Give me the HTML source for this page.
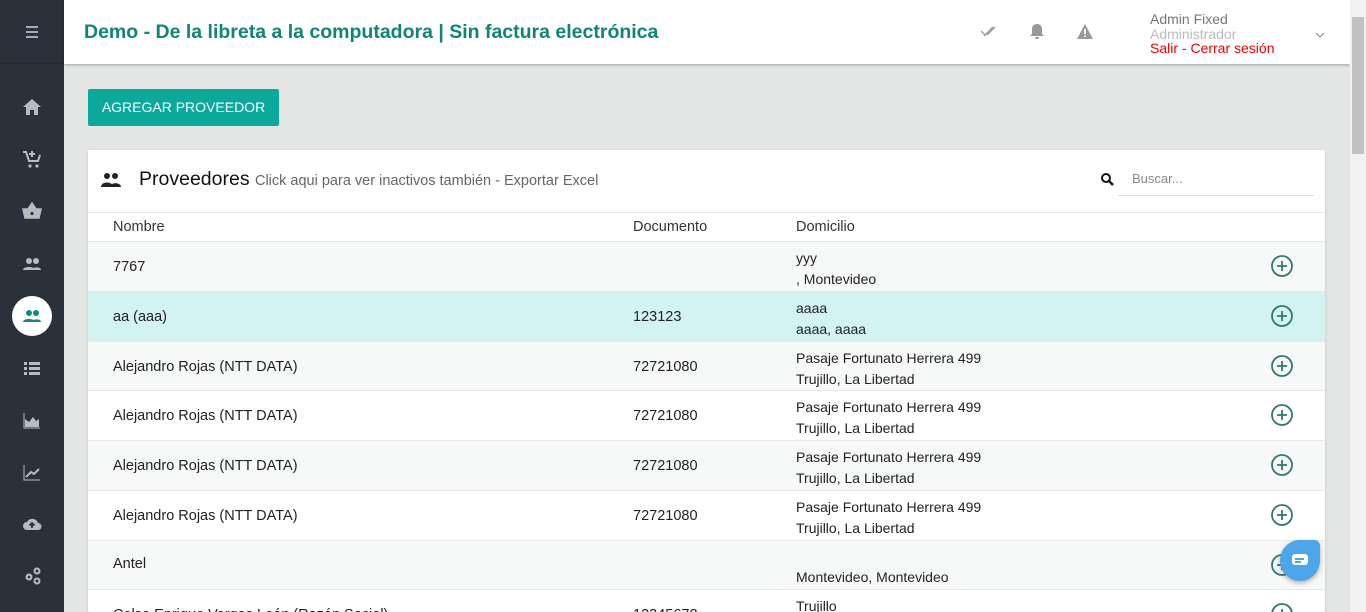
<!DOCTYPE html>
<html style="overflow:hidden;height:612px"><head><meta charset="utf-8"><style>
*{box-sizing:border-box;margin:0;padding:0}
body{width:1366px;height:612px;overflow:hidden;font-family:"Liberation Sans",sans-serif;background:#e4e6e5;position:relative}
.side{position:absolute;left:0;top:0;width:64px;height:612px;background:#2a313a}
.side .top{height:64px;border-bottom:1px solid #252b33}
.ic{position:absolute;left:32px;transform:translate(-50%,-50%);width:20px;height:20px}
.act{position:absolute;left:12px;top:296px;width:40px;height:40px;border-radius:50%;background:#fff}
.hdr{position:absolute;left:64px;top:0;width:1286px;height:64px;background:#fff;box-shadow:0 1px 3px rgba(0,0,0,.3)}
.title{position:absolute;left:20px;top:21px;font-size:19.5px;font-weight:bold;color:#0d8577}
.scroll{position:absolute;left:1350px;top:0;width:16px;height:612px;background:#f1f1f1}
.thumb{position:absolute;left:1352px;top:17px;width:12px;height:137px;background:#c1c1c1}
.btn{position:absolute;left:88px;top:89px;width:191px;height:37px;background:#0ba99c;color:#fff;font-size:14px;text-align:center;line-height:37px;border-radius:2px}
.card{position:absolute;left:88px;top:150px;width:1237px;height:462px;overflow:hidden;background:#fff;border-radius:2px;box-shadow:0 1px 3px rgba(0,0,0,.15)}
.row{position:absolute;left:0;width:1237px;height:50px;border-top:1px solid #e8e8e8;font-size:14.5px;color:#222}
.row .n{position:absolute;left:25px;top:17px}
.row .d{position:absolute;left:545px;top:17px}
.row .a{position:absolute;left:708px;top:6px;font-size:14px;line-height:21px}
.row svg{position:absolute;left:1183px;top:13px}
.g{background:#f7f8f8}.t{background:#d3f3f2}
</style></head><body>
<div class="side"><div class="top"></div>
<svg class="ic" style="top:32px" viewBox="0 0 20 20"><path d="M4 5h12M4 10h12M4 15h12" stroke="#aab" stroke-width="2"/></svg>
<svg class="ic" style="top:107px" viewBox="0 0 20 20"><path d="M10 2L1 10h3v8h4v-5h4v5h4v-8h3z" fill="#b8bcc0"/></svg>
<svg class="ic" style="top:159px" viewBox="0 0 20 20"><path d="M1 3h3l3 9h9l2-6M10 2v6M7 5h6" stroke="#b8bcc0" stroke-width="2" fill="none"/><circle cx="8" cy="17" r="1.6" fill="#b8bcc0"/><circle cx="15" cy="17" r="1.6" fill="#b8bcc0"/></svg>
<svg class="ic" style="top:211px" viewBox="0 0 20 20"><path d="M1 8h18l-2 9H3zM6 8l4-6 4 6" fill="#b8bcc0" stroke="#b8bcc0" stroke-width="1.5"/><circle cx="10" cy="12.5" r="1.6" fill="#2a313a"/></svg>
<svg class="ic" style="top:264px" viewBox="0 0 20 20"><circle cx="7" cy="7" r="3" fill="#b8bcc0"/><circle cx="14" cy="7" r="3" fill="#b8bcc0"/><path d="M1 16c0-4 12-4 12 0zM10 16c0-3 9-4 9 0z" fill="#b8bcc0"/></svg>
<div class="act"></div>
<svg class="ic" style="top:316px" viewBox="0 0 20 20"><circle cx="7" cy="7" r="3" fill="#11897c"/><circle cx="14" cy="7" r="3" fill="#11897c"/><path d="M1 16c0-4 12-4 12 0zM10 16c0-3 9-4 9 0z" fill="#11897c"/></svg>
<svg class="ic" style="top:368px" viewBox="0 0 20 20"><path d="M2 4h3v3H2zM7 4h11v3H7zM2 9h3v3H2zM7 9h11v3H7zM2 14h3v3H2zM7 14h11v3H7z" fill="#b8bcc0"/></svg>
<svg class="ic" style="top:420px" viewBox="0 0 20 20"><path d="M2 3v15h16" stroke="#b8bcc0" fill="none"/><path d="M3 17V9l4 3 4-5 3 4 3-2v8z" fill="#b8bcc0"/></svg>
<svg class="ic" style="top:472px" viewBox="0 0 20 20"><path d="M2 3v15h16" stroke="#b8bcc0" fill="none"/><path d="M4 15l5-5 3 2 5-5" stroke="#b8bcc0" stroke-width="2" fill="none"/></svg>
<svg class="ic" style="top:524px" viewBox="0 0 20 20"><path d="M5 16a4 4 0 010-8 6 6 0 0111 1 3.5 3.5 0 010 7z" fill="#b8bcc0"/><path d="M10 14V9M7.5 11.5L10 9l2.5 2.5" stroke="#2a313a" stroke-width="1.8" fill="none"/></svg>
<svg class="ic" style="top:576px" viewBox="0 0 20 20"><circle cx="7" cy="11" r="3.5" fill="#b8bcc0"/><circle cx="7" cy="11" r="1.3" fill="#2a313a"/><circle cx="15" cy="5" r="2.5" fill="none" stroke="#b8bcc0" stroke-width="2"/><circle cx="15" cy="15" r="2.5" fill="none" stroke="#b8bcc0" stroke-width="2"/></svg>
</div>
<div class="hdr"><div class="title">Demo - De la libreta a la computadora | Sin factura electrónica</div>
<svg style="position:absolute;left:916px;top:24px" width="18" height="14" viewBox="0 0 18 14"><path d="M1 7l4 4 8-8M7 11l8-8M4 11l1 1" stroke="#999" stroke-width="1.3" fill="none"/></svg>
<svg style="position:absolute;left:965px;top:23px" width="16" height="17" viewBox="0 0 16 17"><path d="M8 1c-3 0-5 2-5 5v5l-2 2h14l-2-2V6c0-3-2-5-5-5zM6 14h4a2 2 0 01-4 0z" fill="#999"/></svg>
<svg style="position:absolute;left:1013px;top:24px" width="16" height="15" viewBox="0 0 16 15"><path d="M8 0L0 15h16z" fill="#999"/><path d="M8 5v5M8 11.5v1.5" stroke="#fff" stroke-width="1.8"/></svg>
<div style="position:absolute;left:1086px;top:12px;font-size:14px;line-height:14.5px"><div style="color:#777">Admin Fixed</div><div style="color:#bbb">Administrador</div><div style="color:#e00">Salir - Cerrar sesión</div></div>
<svg style="position:absolute;left:1251px;top:32px" width="10" height="6" viewBox="0 0 10 6"><path d="M1 1l4 4 4-4" stroke="#888" fill="none"/></svg>
</div>
<div class="scroll"></div><div class="thumb"></div>
<div class="btn">AGREGAR PROVEEDOR</div>
<div class="card">
<svg style="position:absolute;left:12px;top:22px" width="22" height="16" viewBox="0 0 20 16"><circle cx="6" cy="4" r="3" fill="#222"/><circle cx="14" cy="4" r="3" fill="#222"/><path d="M0 15c0-6 12-6 12 0zM9 15c0-5 11-5 11 0z" fill="#222"/></svg>
<div style="position:absolute;left:51px;top:18px;font-size:19.5px;color:#111">Proveedores <span style="font-size:14.5px;color:#666">Click aqui para ver inactivos también - Exportar Excel</span></div>
<svg style="position:absolute;left:1012px;top:22px" width="14" height="14" viewBox="0 0 14 14"><circle cx="6" cy="6" r="4" stroke="#111" stroke-width="2" fill="none"/><path d="M9 9l4 4" stroke="#111" stroke-width="2.5"/></svg>
<div style="position:absolute;left:1030px;top:20px;width:196px;height:26px;border-bottom:1px solid #ddd;font-size:13px;color:#888;padding-left:14px;line-height:18px">Buscar...</div>
<div class="row" style="top:62px;height:29px;font-size:14.5px;color:#333"><span style="position:absolute;left:25px;top:6px">Nombre</span><span style="position:absolute;left:545px;top:6px">Documento</span><span style="position:absolute;left:708px;top:6px">Domicilio</span></div>
<div class="row g" style="top:91px"><span class="n">7767</span><div class="a">yyy<br>, Montevideo</div><svg width="22" height="22" viewBox="0 0 22 22"><circle cx="11" cy="11" r="10" stroke="#2e7a6e" stroke-width="1.8" fill="none"/><path d="M11 6v10M6 11h10" stroke="#2e7a6e" stroke-width="1.8"/></svg></div>
<div class="row t" style="top:141px"><span class="n">aa (aaa)</span><span class="d">123123</span><div class="a">aaaa<br>aaaa, aaaa</div><svg width="22" height="22" viewBox="0 0 22 22"><circle cx="11" cy="11" r="10" stroke="#2e7a6e" stroke-width="1.8" fill="none"/><path d="M11 6v10M6 11h10" stroke="#2e7a6e" stroke-width="1.8"/></svg></div>
<div class="row g" style="top:191px"><span class="n">Alejandro Rojas (NTT DATA)</span><span class="d">72721080</span><div class="a">Pasaje Fortunato Herrera 499<br>Trujillo, La Libertad</div><svg width="22" height="22" viewBox="0 0 22 22"><circle cx="11" cy="11" r="10" stroke="#2e7a6e" stroke-width="1.8" fill="none"/><path d="M11 6v10M6 11h10" stroke="#2e7a6e" stroke-width="1.8"/></svg></div>
<div class="row" style="top:240px"><span class="n">Alejandro Rojas (NTT DATA)</span><span class="d">72721080</span><div class="a">Pasaje Fortunato Herrera 499<br>Trujillo, La Libertad</div><svg width="22" height="22" viewBox="0 0 22 22"><circle cx="11" cy="11" r="10" stroke="#2e7a6e" stroke-width="1.8" fill="none"/><path d="M11 6v10M6 11h10" stroke="#2e7a6e" stroke-width="1.8"/></svg></div>
<div class="row g" style="top:290px"><span class="n">Alejandro Rojas (NTT DATA)</span><span class="d">72721080</span><div class="a">Pasaje Fortunato Herrera 499<br>Trujillo, La Libertad</div><svg width="22" height="22" viewBox="0 0 22 22"><circle cx="11" cy="11" r="10" stroke="#2e7a6e" stroke-width="1.8" fill="none"/><path d="M11 6v10M6 11h10" stroke="#2e7a6e" stroke-width="1.8"/></svg></div>
<div class="row" style="top:340px"><span class="n">Alejandro Rojas (NTT DATA)</span><span class="d">72721080</span><div class="a">Pasaje Fortunato Herrera 499<br>Trujillo, La Libertad</div><svg width="22" height="22" viewBox="0 0 22 22"><circle cx="11" cy="11" r="10" stroke="#2e7a6e" stroke-width="1.8" fill="none"/><path d="M11 6v10M6 11h10" stroke="#2e7a6e" stroke-width="1.8"/></svg></div>
<div class="row g" style="top:390px"><span class="n" style="top:15px">Antel</span><div class="a" style="top:26px">Montevideo, Montevideo</div><svg width="22" height="22" viewBox="0 0 22 22"><circle cx="11" cy="11" r="10" stroke="#2e7a6e" stroke-width="1.8" fill="none"/><path d="M11 6v10M6 11h10" stroke="#2e7a6e" stroke-width="1.8"/></svg></div>
<div class="row" style="top:439px"><span class="n">Celso Enrique Vargas León (Razón Social)</span><span class="d">12345678</span><div class="a">Trujillo</div><svg width="22" height="22" viewBox="0 0 22 22"><circle cx="11" cy="11" r="10" stroke="#2e7a6e" stroke-width="1.8" fill="none"/><path d="M11 6v10M6 11h10" stroke="#2e7a6e" stroke-width="1.8"/></svg></div>
</div>
<div style="position:absolute;left:1280px;top:540px;width:40px;height:41px;background:#4da6ea;border-radius:50% 6px 50% 50%;box-shadow:0 2px 5px rgba(0,0,0,.3)"><div style="position:absolute;left:12px;top:14px;width:16px;height:11px;background:#fff;border-radius:3px"></div><div style="position:absolute;left:15px;top:18px;width:9px;height:1.5px;background:#4da6ea"></div><div style="position:absolute;left:15px;top:21px;width:6px;height:1.5px;background:#4da6ea"></div></div>
</body></html>
